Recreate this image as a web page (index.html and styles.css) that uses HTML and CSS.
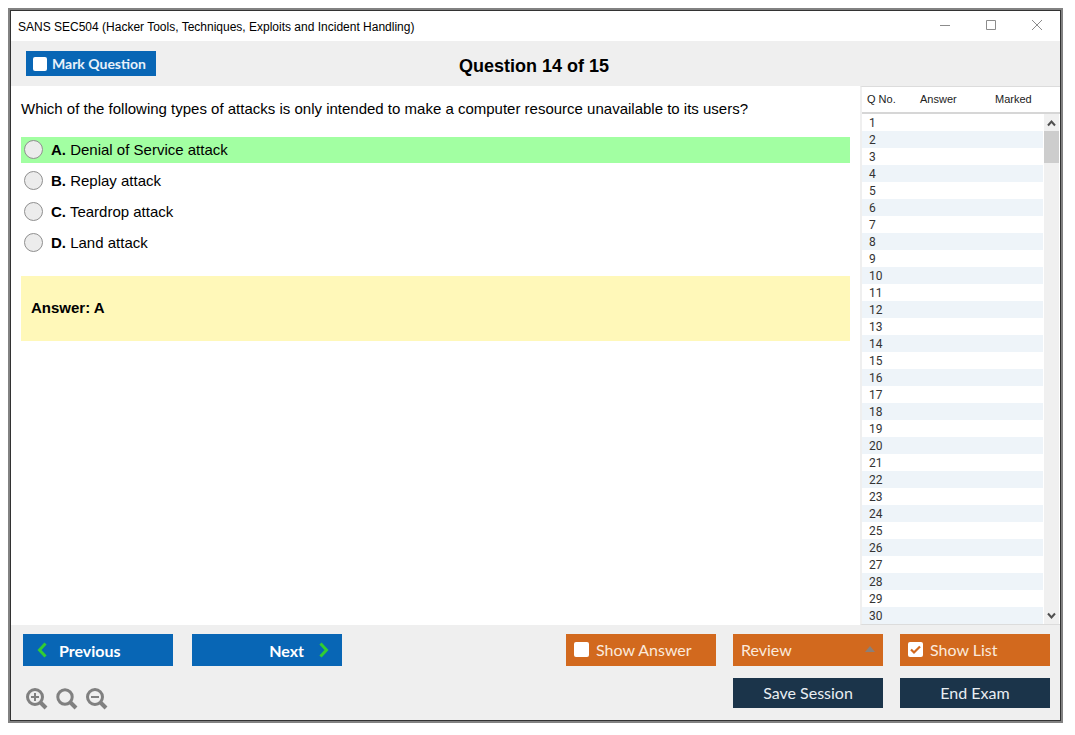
FILE: index.html
```
<!DOCTYPE html>
<html lang="en">
<head>
    <meta charset="UTF-8">
    <meta name="viewport" content="width=device-width, initial-scale=1.0">
    <title>SANS SEC504 (Hacker Tools, Techniques, Exploits and Incident Handling)</title>
    <link rel="stylesheet" href="styles.css">
</head>
<body>
    <div class="window">
        <div class="titlebar">
            <span class="titlebar-text">SANS SEC504 (Hacker Tools, Techniques, Exploits and Incident Handling)</span>
            <div class="window-buttons">
                <button type="button" aria-label="Minimize"><svg width="12" height="12"><path d="M1 6.5h10"/></svg></button>
                <button type="button" aria-label="Maximize"><svg width="12" height="12"><path d="M1.5 1.5h9v9h-9z"/></svg></button>
                <button type="button" aria-label="Close"><svg width="12" height="12"><path d="M1 1l10 10M11 1L1 11"/></svg></button>
            </div>
        </div>

        <header class="header">
            <label class="mark"><input type="checkbox" class="check">Mark Question</label>
            <h1>Question 14 of 15</h1>
        </header>

        <div class="content">
            <main class="question">
                <p class="question-text">Which of the following types of attacks is only intended to make a computer resource unavailable to its users?</p>
                <div class="options">
                    <label class="option correct"><input type="radio" name="answer" value="A"><span><b>A.</b> Denial of Service attack</span></label>
                    <label class="option"><input type="radio" name="answer" value="B"><span><b>B.</b> Replay attack</span></label>
                    <label class="option"><input type="radio" name="answer" value="C"><span><b>C.</b> Teardrop attack</span></label>
                    <label class="option"><input type="radio" name="answer" value="D"><span><b>D.</b> Land attack</span></label>
                </div>
                <div class="answer">Answer: A</div>
            </main>

            <aside class="list">
                <table>
                    <thead>
                        <tr><th class="col-no">Q No.</th><th class="col-answer">Answer</th><th class="col-marked">Marked</th></tr>
                    </thead>
                    <tbody>
                        <tr><td>1</td><td></td><td></td></tr>
                        <tr><td>2</td><td></td><td></td></tr>
                        <tr><td>3</td><td></td><td></td></tr>
                        <tr><td>4</td><td></td><td></td></tr>
                        <tr><td>5</td><td></td><td></td></tr>
                        <tr><td>6</td><td></td><td></td></tr>
                        <tr><td>7</td><td></td><td></td></tr>
                        <tr><td>8</td><td></td><td></td></tr>
                        <tr><td>9</td><td></td><td></td></tr>
                        <tr><td>10</td><td></td><td></td></tr>
                        <tr><td>11</td><td></td><td></td></tr>
                        <tr><td>12</td><td></td><td></td></tr>
                        <tr><td>13</td><td></td><td></td></tr>
                        <tr><td>14</td><td></td><td></td></tr>
                        <tr><td>15</td><td></td><td></td></tr>
                        <tr><td>16</td><td></td><td></td></tr>
                        <tr><td>17</td><td></td><td></td></tr>
                        <tr><td>18</td><td></td><td></td></tr>
                        <tr><td>19</td><td></td><td></td></tr>
                        <tr><td>20</td><td></td><td></td></tr>
                        <tr><td>21</td><td></td><td></td></tr>
                        <tr><td>22</td><td></td><td></td></tr>
                        <tr><td>23</td><td></td><td></td></tr>
                        <tr><td>24</td><td></td><td></td></tr>
                        <tr><td>25</td><td></td><td></td></tr>
                        <tr><td>26</td><td></td><td></td></tr>
                        <tr><td>27</td><td></td><td></td></tr>
                        <tr><td>28</td><td></td><td></td></tr>
                        <tr><td>29</td><td></td><td></td></tr>
                        <tr><td>30</td><td></td><td></td></tr>
                    </tbody>
                </table>
                <div class="scroll">
                    <div class="scroll-head"></div>
                    <div class="scroll-track">
                        <button type="button" aria-label="Scroll up"><svg width="9" height="8"><path d="M1 6.5L4.500 2.500L8 6.500"/></svg></button>
                        <div class="scroll-thumb"></div>
                        <button type="button" class="scroll-down" aria-label="Scroll down"><svg width="9" height="8"><path d="M1 1.500L4.500 5.500L8 1.500"/></svg></button>
                    </div>
                </div>
            </aside>
        </div>

        <footer class="footer">
            <div class="row">
                <div class="group nav">
                    <button type="button" class="btn blue prev">
                        <svg width="10" height="16"><path d="M8.500 1.500L2.500 8l6 6.500"/></svg>
                        Previous
                    </button>
                    <button type="button" class="btn blue next">
                        Next
                        <svg width="10" height="16"><path d="M1.500 1.500l6 6.500l-6 6.500"/></svg>
                    </button>
                </div>
                <div class="group">
                    <label class="btn orange"><input type="checkbox" class="check">Show Answer</label>
                    <div class="btn orange review">
                        <select aria-label="Review">
                            <option>Review</option>
                        </select>
                        <svg width="10" height="6"><path d="M0 6L5 0l5 6z"/></svg>
                    </div>
                    <label class="btn orange"><input type="checkbox" class="check" checked>Show List</label>
                </div>
            </div>
            <div class="row">
                <div class="zoom">
                    <button type="button" aria-label="Zoom in"><svg width="22" height="22"><circle cx="9" cy="9" r="7.500"/><path class="handle" d="M14 14L20 20"/><path class="sign" d="M5 9h8M9 5v8"/></svg></button>
                    <button type="button" aria-label="Reset zoom"><svg width="22" height="22"><circle class="thick" cx="9" cy="9" r="7.200"/><path class="handle" d="M14 14L20 20"/></svg></button>
                    <button type="button" aria-label="Zoom out"><svg width="22" height="22"><circle cx="9" cy="9" r="7.500"/><path class="handle" d="M14 14L20 20"/><path class="sign" d="M5 9h8"/></svg></button>
                </div>
                <div class="group">
                    <button type="button" class="btn navy">Save Session</button>
                    <button type="button" class="btn navy">End Exam</button>
                </div>
            </div>
        </footer>
    </div>
</body>
</html>
```
FILE: styles.css
```
:root {
    --blue: #0866b5;
    --orange: #d2691e;
    --navy: #1b344a;
    --gray: #efefef;
}

* {
    box-sizing: border-box;
}

body {
    margin: 8px 12px 12px 8px;
    background: #fff;
    color: #000;
    font-family: "Liberation Sans", Arial, sans-serif;
    font-size: 15px;
}

button {
    margin: 0;
    padding: 0;
    border: none;
    background: none;
    font: inherit;
}

svg {
    display: block;
    fill: none;
}

.window {
    display: flex;
    flex-direction: column;
    min-height: calc(100vh - 20px);
    border: 2px solid #828282;
    outline: 1px solid #333;
    outline-offset: -3px;
    padding: 1px;
}

/* Title bar */
.titlebar {
    display: flex;
    justify-content: space-between;
    align-items: center;
    height: 30px;
    padding: 0 17px 0 7px;
    font-size: 12px;
}

.titlebar-text {
    padding-top: 2px;
}

.window-buttons {
    display: flex;
    gap: 34px;
    padding-bottom: 2px;
}

.window-buttons svg {
    stroke: #8c8c8c;
}

/* Header */
.header {
    display: grid;
    grid-template-columns: 1fr auto 1fr;
    align-items: center;
    height: 45px;
    padding: 0 18px 0 15px;
    background: var(--gray);
}

.header h1 {
    margin: 4px 0 0;
    font-size: 18px;
    line-height: 20px;
}

.mark {
    display: flex;
    align-items: center;
    justify-self: start;
    gap: 5px;
    width: 130px;
    height: 25px;
    padding-left: 7px;
    background: var(--blue);
    color: #e8f1fa;
    font: bold 14px Lato, sans-serif;
}

.check {
    appearance: none;
    flex: none;
    width: 15px;
    height: 15px;
    margin: 0;
    border-radius: 2px;
    background: #fff;
}

.mark .check {
    width: 14px;
    height: 14px;
}

.check:checked {
    background: #fff url("data:image/svg+xml,%3Csvg xmlns='http://www.w3.org/2000/svg' viewBox='0 0 15 15'%3E%3Cpath d='M3 7.500l3 3L12 4.500' fill='none' stroke='%23d2691e' stroke-width='2.200'/%3E%3C/svg%3E");
}

/* Question */
.content {
    display: flex;
    flex: 1;
}

.question {
    flex: 1;
    padding: 13px 10px 0;
}

.question-text {
    margin: 0 0 18px;
    line-height: 20px;
}

.options {
    display: flex;
    flex-direction: column;
    gap: 5px;
    margin-bottom: 20px;
}

.option {
    display: flex;
    align-items: center;
    gap: 8px;
    height: 26px;
    padding: 0 0 2px 3px;
}

.option input {
    appearance: none;
    width: 19px;
    height: 19px;
    margin: 0;
    border: 1px solid #8f8f8f;
    border-radius: 50%;
    background: #ececec;
}

.option input:checked {
    box-shadow: inset 0 0 0 5px #ececec;
    background: #333;
}

.correct {
    background: #a2ffa2;
}

.answer {
    padding: 22px 10px 23px;
    background: #fff8b9;
    font-weight: bold;
    line-height: 20px;
}

/* Question list */
.list {
    display: flex;
    width: 200px;
    border-top: 1px solid #dcdcdc;
    border-bottom: 1px solid #dcdcdc;
    border-left: 2px solid #efefef;
}

.list table {
    flex: 1;
    border-spacing: 0;
    align-self: flex-start;
}

.list th {
    height: 27px;
    padding: 0 5px 1px;
    border-bottom: 2px solid #d6d6d6;
    color: #222;
    font-size: 11px;
    font-weight: normal;
    text-align: left;
}

.list td {
    height: 17px;
    padding: 1px 7px 0;
    color: #333;
    font: 12px/16px Roboto, sans-serif;
}

.list tbody tr:nth-child(even) {
    background: #eef4f9;
}

.list .col-no {
    width: 53px;
    white-space: nowrap;
}

.list .col-answer {
    width: 70px;
}

.list .col-marked {
    padding-left: 10px;
}

.scroll {
    display: flex;
    flex-direction: column;
    width: 17px;
}

.scroll-head {
    height: 27px;
    border-bottom: 2px solid #d6d6d6;
}

.scroll-track {
    display: flex;
    flex-direction: column;
    flex: 1;
    margin: 0 1px;
    background: #f0f0f0;
}

.scroll-track button {
    display: grid;
    place-items: center;
    height: 17px;
}

.scroll-track svg {
    stroke: #505050;
    stroke-width: 2;
}

.scroll-thumb {
    height: 32px;
    background: #cdcdcd;
}

.scroll-down {
    margin-top: auto;
}

/* Footer */
.footer {
    display: flex;
    flex-direction: column;
    gap: 12px;
    padding: 9px 10px 12px 12px;
    background: var(--gray);
}

.row {
    display: flex;
    justify-content: space-between;
}

.group {
    display: flex;
    gap: 17px;
}

.nav {
    gap: 19px;
}

.btn {
    display: flex;
    align-items: center;
    gap: 7px;
    width: 150px;
    height: 32px;
    padding: 0 8px;
    font: 16px Lato, sans-serif;
}

.blue {
    background: var(--blue);
    color: #fff;
    font-weight: bold;
}

.blue svg {
    stroke: #32cd32;
    stroke-width: 3;
}

.prev {
    gap: 12px;
    padding: 0 14px;
}

.next {
    gap: 15px;
    justify-content: flex-end;
    padding: 0 13px;
}

.orange {
    padding-bottom: 2px;
    background: var(--orange);
    color: #fbe9dc;
}

.review select {
    appearance: none;
    flex: 1;
    padding: 0;
    border: none;
    background: none;
    color: inherit;
    font: inherit;
}

.review svg {
    fill: #8b7f78;
}

.navy {
    justify-content: center;
    height: 30px;
    padding-bottom: 2px;
    background: var(--navy);
    color: #e9eef2;
}

.zoom {
    display: flex;
    align-items: flex-end;
    gap: 8px;
    padding-left: 3px;
}

.zoom button {
    height: 20px;
}

.zoom svg {
    stroke: #808080;
    stroke-width: 3;
}

.zoom .handle {
    stroke-width: 4;
}

.zoom .sign {
    stroke-width: 2;
}
```
